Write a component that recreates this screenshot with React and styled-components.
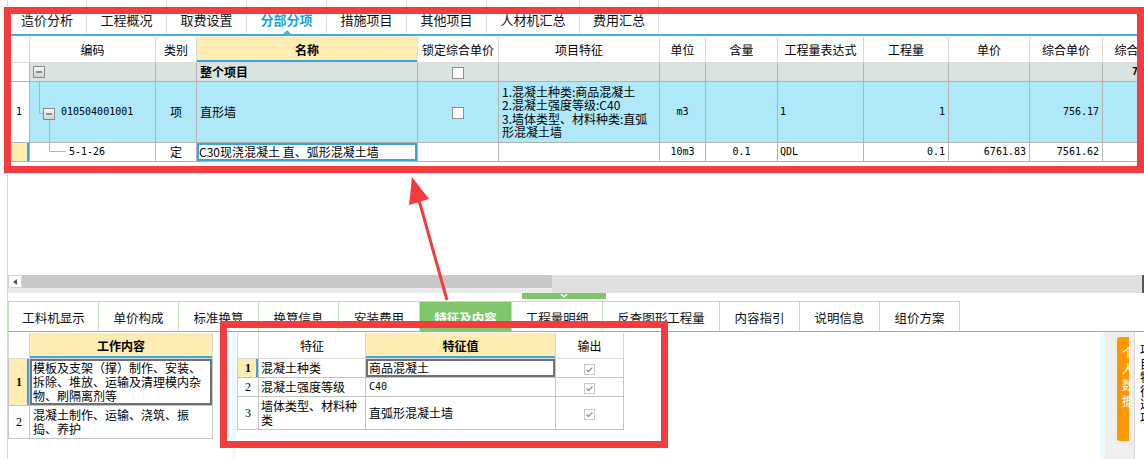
import React from "react";
import styled, { createGlobalStyle, css } from "styled-components";

const Global = createGlobalStyle`
  html, body { margin: 0; padding: 0; background: #fff; }
  body {
    font-family: "Noto Sans CJK SC", "Noto Sans", sans-serif;
    font-size: 12px;
    color: #000;
  }
  * { box-sizing: border-box; }
`;

const RED = "#f43b3d";
const MONO = `"DejaVu Sans Mono", "Liberation Mono", "Noto Sans CJK SC", monospace`;

const Screen = styled.div`
  position: relative;
  width: 1144px;
  height: 459px;
  overflow: hidden;
  background: #fff;
  padding-left: 7px;
`;

const Main = styled.div`
  height: 100%;
  border-left: 1px solid #d6d6d6;
  display: flex;
  flex-direction: column;
`;

/* ---------- top tabs ---------- */
const TopTabs = styled.div`
  flex: none;
  display: flex;
  height: 36px;
  border-bottom: 2px solid #45ade0;
`;
const TopTab = styled.div`
  position: relative;
  width: ${(p) => p.$w}px;
  border-right: 1px solid #dedede;
  display: flex;
  align-items: center;
  justify-content: center;
  padding-top: 5px;
  font-size: 13px;
  color: ${(p) => (p.$active ? "#1aa1e6" : "#111")};
  font-weight: ${(p) => (p.$active ? 700 : 400)};
  ${(p) =>
    p.$active &&
    css`
      &::after {
        content: "";
        position: absolute;
        bottom: 0;
        left: 50%;
        margin-left: -4px;
        border: 4px solid transparent;
        border-bottom-color: #45ade0;
      }
    `}
`;

/* ---------- main grid ---------- */
const GridArea = styled.div`
  flex: none;
  height: 239px;
  overflow: hidden;
  padding-top: 1px;
`;
const Table = styled.table`
  border-collapse: collapse;
  table-layout: fixed;
  width: ${(p) => p.$w}px;
`;
const Col = styled.col`
  width: ${(p) => p.$w}px;
`;
const Head = styled.th`
  height: ${(p) => p.$h || 25}px;
  border: 1px solid #d8d8d8;
  border-top: none;
  padding: 0;
  text-align: center;
  white-space: nowrap;
  overflow: hidden;
  font-size: 12px;
  font-weight: ${(p) => (p.$key ? 700 : 400)};
  background: ${(p) => (p.$key ? "#feecb3" : "#fff")};
  box-shadow: ${(p) => (p.$key ? "inset 0 -2px 0 #3aa6dd" : "none")};
`;
const Row = styled.tr`
  height: ${(p) => p.$h}px;
  background: ${(p) => p.$bg || "#fff"};
`;
const Cell = styled.td`
  border: 1px solid ${(p) => p.$line || "#b3b3b3"};
  padding: 0 ${(p) => (p.$pad ?? 3)}px;
  ${(p) => p.$indent != null && css`padding-left: ${p.$indent}px;`}
  text-align: ${(p) => p.$align || "left"};
  vertical-align: middle;
  white-space: nowrap;
  overflow: hidden;
  font-family: ${(p) => (p.$mono ? MONO : "inherit")};
  font-size: ${(p) => (p.$mono ? "10px" : "12px")};
  font-weight: ${(p) => (p.$bold ? 700 : 400)};
  line-height: ${(p) => p.$lh || 14}px;
  ${(p) => p.$bg && css`background: ${p.$bg};`}
  ${(p) => p.$sel && css`box-shadow: inset 0 0 0 2px ${p.$sel};`}
  ${(p) => p.$mark && css`box-shadow: inset -2px 0 0 #39a3dc;`}
`;
const Tree = styled.div`
  display: flex;
  align-items: center;
  font-family: ${MONO};
  font-size: 10px;
  svg { display: block; flex: none; }
`;
const Check = styled.span`
  display: inline-block;
  vertical-align: middle;
  width: 12px;
  height: 12px;
  border: 1px solid #8e8e8e;
  background: #fff;
`;
const Lines = styled.div`
  white-space: nowrap;
  line-height: ${(p) => p.$lh || 13.5}px;
`;

/* ---------- scrollbar / splitter ---------- */
const ScrollBar = styled.div`
  flex: none;
  height: 18px;
  display: flex;
  background: #e0e0e0;
  border-right: 2px solid #555;
`;
const ScrollLeft = styled.div`
  width: 544px;
  display: flex;
  flex-direction: column;
`;
const ScrollTop = styled.div`
  height: 13px;
  display: flex;
`;
const ScrollUnder = styled.div`
  flex: 1;
  background: #ebebeb;
`;
const ArrowBtn = styled.div`
  width: 14px;
  background: #fff;
  border: 1px solid #d2d2d2;
  display: flex;
  align-items: center;
  justify-content: center;
  &::before {
    content: "";
    border: 3px solid transparent;
    border-right: 4px solid #555;
    border-left: none;
  }
`;
const Thumb = styled.div`
  flex: 1;
  background: #c8c8c8;
  border-radius: 0 2px 2px 0;
`;
const HandleRow = styled.div`
  flex: none;
  height: 8px;
  padding-left: 514px;
`;
const Handle = styled.div`
  width: 84px;
  height: 6px;
  background: #80c46c;
  display: flex;
  justify-content: center;
  svg { display: block; }
`;

/* ---------- bottom tabs ---------- */
const BottomTabs = styled.div`
  flex: none;
  display: flex;
  height: 31px;
  border-bottom: 1px solid #86c675;
`;
const BottomTab = styled.div`
  width: ${(p) => p.$w}px;
  border-top: 1px solid #bfe2ad;
  border-right: 1px solid #bfe2ad;
  ${(p) => p.$first && css`border-left: 1px solid #bfe2ad;`}
  display: flex;
  align-items: center;
  justify-content: center;
  padding-top: 2px;
  font-size: 12.5px;
  background: ${(p) => (p.$active ? "#80c46c" : "#fff")};
  color: ${(p) => (p.$active ? "#fff" : "#111")};
  font-weight: ${(p) => (p.$active ? 700 : 400)};
`;

/* ---------- bottom panels ---------- */
const Panels = styled.div`
  flex: 1;
  display: flex;
  min-height: 0;
`;
const LeftPanel = styled.div`
  flex: none;
  width: 224px;
  padding-top: 1px;
`;
const Splitter = styled.div`
  flex: none;
  width: ${(p) => p.$w}px;
  background: #eafafd;
`;
const MiddlePanel = styled.div`
  flex: 1;
  padding: 1px 0 0 1px;
`;
const SidePanel = styled.div`
  flex: none;
  width: 29px;
  background: #efefef;
  padding: 5px 0 0 12px;
`;
const OrangeTab = styled.div`
  width: 12px;
  height: 104px;
  background: #ff9800;
  border-radius: 3px 0 0 3px;
  overflow: hidden;
  color: #fff;
  display: flex;
  flex-direction: column;
  padding: 8px 0 0 5px;
  font-size: 12px;
  line-height: 16px;
`;
const RightPanel = styled.div`
  flex: none;
  width: 10px;
  border-left: 1px solid #d6d6d6;
  background: #fff;
  overflow: hidden;
  display: flex;
  flex-direction: column;
  padding: 11px 0 0 5px;
  font-size: 12px;
  line-height: 13.6px;
`;
const SerifNum = styled.span`
  font-family: "Liberation Serif", serif;
  font-weight: ${(p) => (p.$bold ? 700 : 400)};
  font-size: 12px;
`;

/* ---------- annotations ---------- */
const RedBox = styled.div`
  position: absolute;
  left: ${(p) => p.$x}px;
  top: ${(p) => p.$y}px;
  width: ${(p) => p.$w}px;
  height: ${(p) => p.$h}px;
  border: 7px solid ${RED};
  pointer-events: none;
`;
const ArrowLayer = styled.svg`
  position: absolute;
  left: 0;
  top: 0;
  pointer-events: none;
`;

/* ---------- drawings ---------- */
const Box = ({ x, y }) => (
  <g>
    <rect x={x + 0.5} y={y + 0.5} width="11" height="11" fill="url(#bx)" stroke="#8a8a8a" />
    <line x1={x + 3} y1={y + 6} x2={x + 9} y2={y + 6} stroke="#333" />
  </g>
);
const Defs = () => (
  <defs>
    <linearGradient id="bx" x1="0" y1="0" x2="0" y2="1">
      <stop offset="0" stopColor="#fafafa" />
      <stop offset="1" stopColor="#cfcfcf" />
    </linearGradient>
  </defs>
);

const OutCheck = () => (
  <svg width="11" height="11" viewBox="0 0 11 11" style={{ display: "inline-block", verticalAlign: "middle" }}>
    <rect x="0.5" y="0.5" width="10" height="10" fill="#fff" stroke="#c9c9c9" />
    <path d="M2.5 5.5 L4.5 7.5 L8.5 3.5" fill="none" stroke="#8c8c8c" strokeWidth="1.2" />
  </svg>
);

const topTabs = [
  ["造价分析", 79], ["工程概况", 80], ["取费设置", 80], ["分部分项", 80, true],
  ["措施项目", 80], ["其他项目", 80], ["人材机汇总", 93], ["费用汇总", 79],
];
const bottomTabs = [
  ["工料机显示", 91], ["单价构成", 80], ["标准换算", 80], ["换算信息", 80], ["安装费用", 81],
  ["特征及内容", 92, true], ["工程量明细", 91], ["反查图形工程量", 117], ["内容指引", 80],
  ["说明信息", 80], ["组价方案", 80],
];
const gridCols = [21, 126, 41, 221, 81, 161, 46, 72, 86, 85, 81, 73, 72];
const gridHeads = ["", "编码", "类别", "名称", "锁定综合单价", "项目特征", "单位", "含量", "工程量表达式", "工程量", "单价", "综合单价", "综合合价"];

const BLUE_ROW = "#aee8f9";
const GRAY_ROW = "#d9e3df";
const YELLOW = "#feecb3";

export default function App() {
  return (
    <Screen>
      <Global />
      <Main>
        <TopTabs>
          {topTabs.map(([t, w, a]) => (
            <TopTab key={t} $w={w} $active={a}>{t}</TopTab>
          ))}
        </TopTabs>

        <GridArea>
          <Table $w={gridCols.reduce((a, b) => a + b, 0)}>
            <colgroup>
              {gridCols.map((w, i) => <Col key={i} $w={w} />)}
            </colgroup>
            <thead>
              <tr>
                {gridHeads.map((h, i) => (
                  <Head key={i} $key={h === "名称"}>{h}</Head>
                ))}
              </tr>
            </thead>
            <tbody>
              <Row $h={19} $bg={GRAY_ROW}>
                <Cell $bg="#fff" />
                <Cell $pad={0}>
                  <Tree>
                    <svg width="20" height="18"><Defs /><Box x={3} y={3} /></svg>
                  </Tree>
                </Cell>
                <Cell />
                <Cell $bold>整个项目</Cell>
                <Cell $align="center"><Check /></Cell>
                <Cell /><Cell /><Cell /><Cell /><Cell /><Cell /><Cell />
                <Cell $mono $bold $indent={29}>756.17</Cell>
              </Row>
              <Row $h={61} $bg={BLUE_ROW}>
                <Cell $bg="#fff" $mono $align="center" $pad={0}>1</Cell>
                <Cell $pad={0}>
                  <Tree>
                    <svg width="31" height="60">
                      <Defs />
                      <path d="M9.5 0 V31.5 H13" fill="none" stroke="#b4b4b4" />
                      <path d="M19.5 37 V60" fill="none" stroke="#b4b4b4" />
                      <Box x={13} y={26} />
                    </svg>
                    <span>010504001001</span>
                  </Tree>
                </Cell>
                <Cell $align="center">项</Cell>
                <Cell>直形墙</Cell>
                <Cell $align="center"><Check /></Cell>
                <Cell>
                  <Lines>
                    1.混凝土种类:商品混凝土<br />
                    2.混凝土强度等级:C40<br />
                    3.墙体类型、材料种类:直弧<br />
                    形混凝土墙
                  </Lines>
                </Cell>
                <Cell $mono $align="center">m3</Cell>
                <Cell />
                <Cell $mono $pad={2}>1</Cell>
                <Cell $mono $align="right">1</Cell>
                <Cell />
                <Cell $mono $align="right">756.17</Cell>
                <Cell />
              </Row>
              <Row $h={19}>
                <Cell $bg={YELLOW} $mark />
                <Cell $pad={0}>
                  <Tree>
                    <svg width="39" height="18">
                      <path d="M19.5 0 V8.5 H36" fill="none" stroke="#b4b4b4" />
                    </svg>
                    <span>5-1-26</span>
                  </Tree>
                </Cell>
                <Cell $align="center">定</Cell>
                <Cell $sel="#39a3dc" $pad={2}>C30现浇混凝土 直、弧形混凝土墙</Cell>
                <Cell />
                <Cell />
                <Cell $mono $align="center">10m3</Cell>
                <Cell $mono $align="center">0.1</Cell>
                <Cell $mono $pad={2}>QDL</Cell>
                <Cell $mono $align="right">0.1</Cell>
                <Cell $mono $align="right">6761.83</Cell>
                <Cell $mono $align="right">7561.62</Cell>
                <Cell />
              </Row>
            </tbody>
          </Table>
        </GridArea>

        <ScrollBar>
          <ScrollLeft>
            <ScrollTop>
              <ArrowBtn />
              <Thumb />
            </ScrollTop>
            <ScrollUnder />
          </ScrollLeft>
        </ScrollBar>
        <HandleRow>
          <Handle>
            <svg width="10" height="6" viewBox="0 0 10 6">
              <path d="M2 1 L5 4 L8 1" fill="none" stroke="#fff" strokeWidth="1.3" />
            </svg>
          </Handle>
        </HandleRow>

        <BottomTabs>
          {bottomTabs.map(([t, w, a], i) => (
            <BottomTab key={t} $w={w} $active={a} $first={i === 0}>{t}</BottomTab>
          ))}
        </BottomTabs>

        <Panels>
          <LeftPanel>
            <Table $w={204}>
              <colgroup>
                <Col $w={21} />
                <Col $w={183} />
              </colgroup>
              <thead>
                <tr>
                  <Head />
                  <Head $key>工作内容</Head>
                </tr>
              </thead>
              <tbody>
                <Row $h={47}>
                  <Cell $line="#c4c4c4" $bg={YELLOW} $mark $align="center"><SerifNum $bold>1</SerifNum></Cell>
                  <Cell $line="#c4c4c4" $sel="#707070">
                    <Lines $lh={14}>
                      模板及支架（撑）制作、安装、<br />
                      拆除、堆放、运输及清理模内杂<br />
                      物、刷隔离剂等
                    </Lines>
                  </Cell>
                </Row>
                <Row $h={33}>
                  <Cell $line="#c4c4c4" $align="center"><SerifNum>2</SerifNum></Cell>
                  <Cell $line="#c4c4c4">
                    <Lines>
                      混凝土制作、运输、浇筑、振<br />
                      捣、养护
                    </Lines>
                  </Cell>
                </Row>
              </tbody>
            </Table>
          </LeftPanel>
          <Splitter $w={4} />
          <MiddlePanel>
            <Table $w={386}>
              <colgroup>
                <Col $w={21} />
                <Col $w={107} />
                <Col $w={190} />
                <Col $w={68} />
              </colgroup>
              <thead>
                <tr>
                  <Head />
                  <Head>特征</Head>
                  <Head $key>特征值</Head>
                  <Head>输出</Head>
                </tr>
              </thead>
              <tbody>
                <Row $h={19}>
                  <Cell $line="#c4c4c4" $bg={YELLOW} $mark $align="center"><SerifNum $bold>1</SerifNum></Cell>
                  <Cell $line="#c4c4c4" $pad={2}>混凝土种类</Cell>
                  <Cell $line="#c4c4c4" $sel="#707070">商品混凝土</Cell>
                  <Cell $line="#c4c4c4" $align="center"><OutCheck /></Cell>
                </Row>
                <Row $h={19}>
                  <Cell $line="#c4c4c4" $align="center"><SerifNum>2</SerifNum></Cell>
                  <Cell $line="#c4c4c4" $pad={2}>混凝土强度等级</Cell>
                  <Cell $line="#c4c4c4" $mono>C40</Cell>
                  <Cell $line="#c4c4c4" $align="center"><OutCheck /></Cell>
                </Row>
                <Row $h={33}>
                  <Cell $line="#c4c4c4" $align="center"><SerifNum>3</SerifNum></Cell>
                  <Cell $line="#c4c4c4" $pad={2}>
                    <Lines>
                      墙体类型、材料种<br />类
                    </Lines>
                  </Cell>
                  <Cell $line="#c4c4c4">直弧形混凝土墙</Cell>
                  <Cell $line="#c4c4c4" $align="center"><OutCheck /></Cell>
                </Row>
              </tbody>
            </Table>
          </MiddlePanel>
          <Splitter $w={5} />
          <SidePanel>
            <OrangeTab>
              <span>个</span>
              <span>人</span>
              <span>数</span>
              <span>据</span>
            </OrangeTab>
          </SidePanel>
          <RightPanel>
            <span>项</span>
            <span>目</span>
            <span>特</span>
            <span>征</span>
            <span>选</span>
            <span>项</span>
          </RightPanel>
        </Panels>
      </Main>

      <RedBox $x={4} $y={7} $w={1140} $h={166} />
      <RedBox $x={220} $y={321} $w={448} $h={127} />
      <ArrowLayer width="1144" height="459" viewBox="0 0 1144 459">
        <line x1="447" y1="300" x2="419" y2="200" stroke={RED} strokeWidth="3" />
        <polygon points="412,177 429,199 409,205" fill={RED} />
      </ArrowLayer>
    </Screen>
  );
}
